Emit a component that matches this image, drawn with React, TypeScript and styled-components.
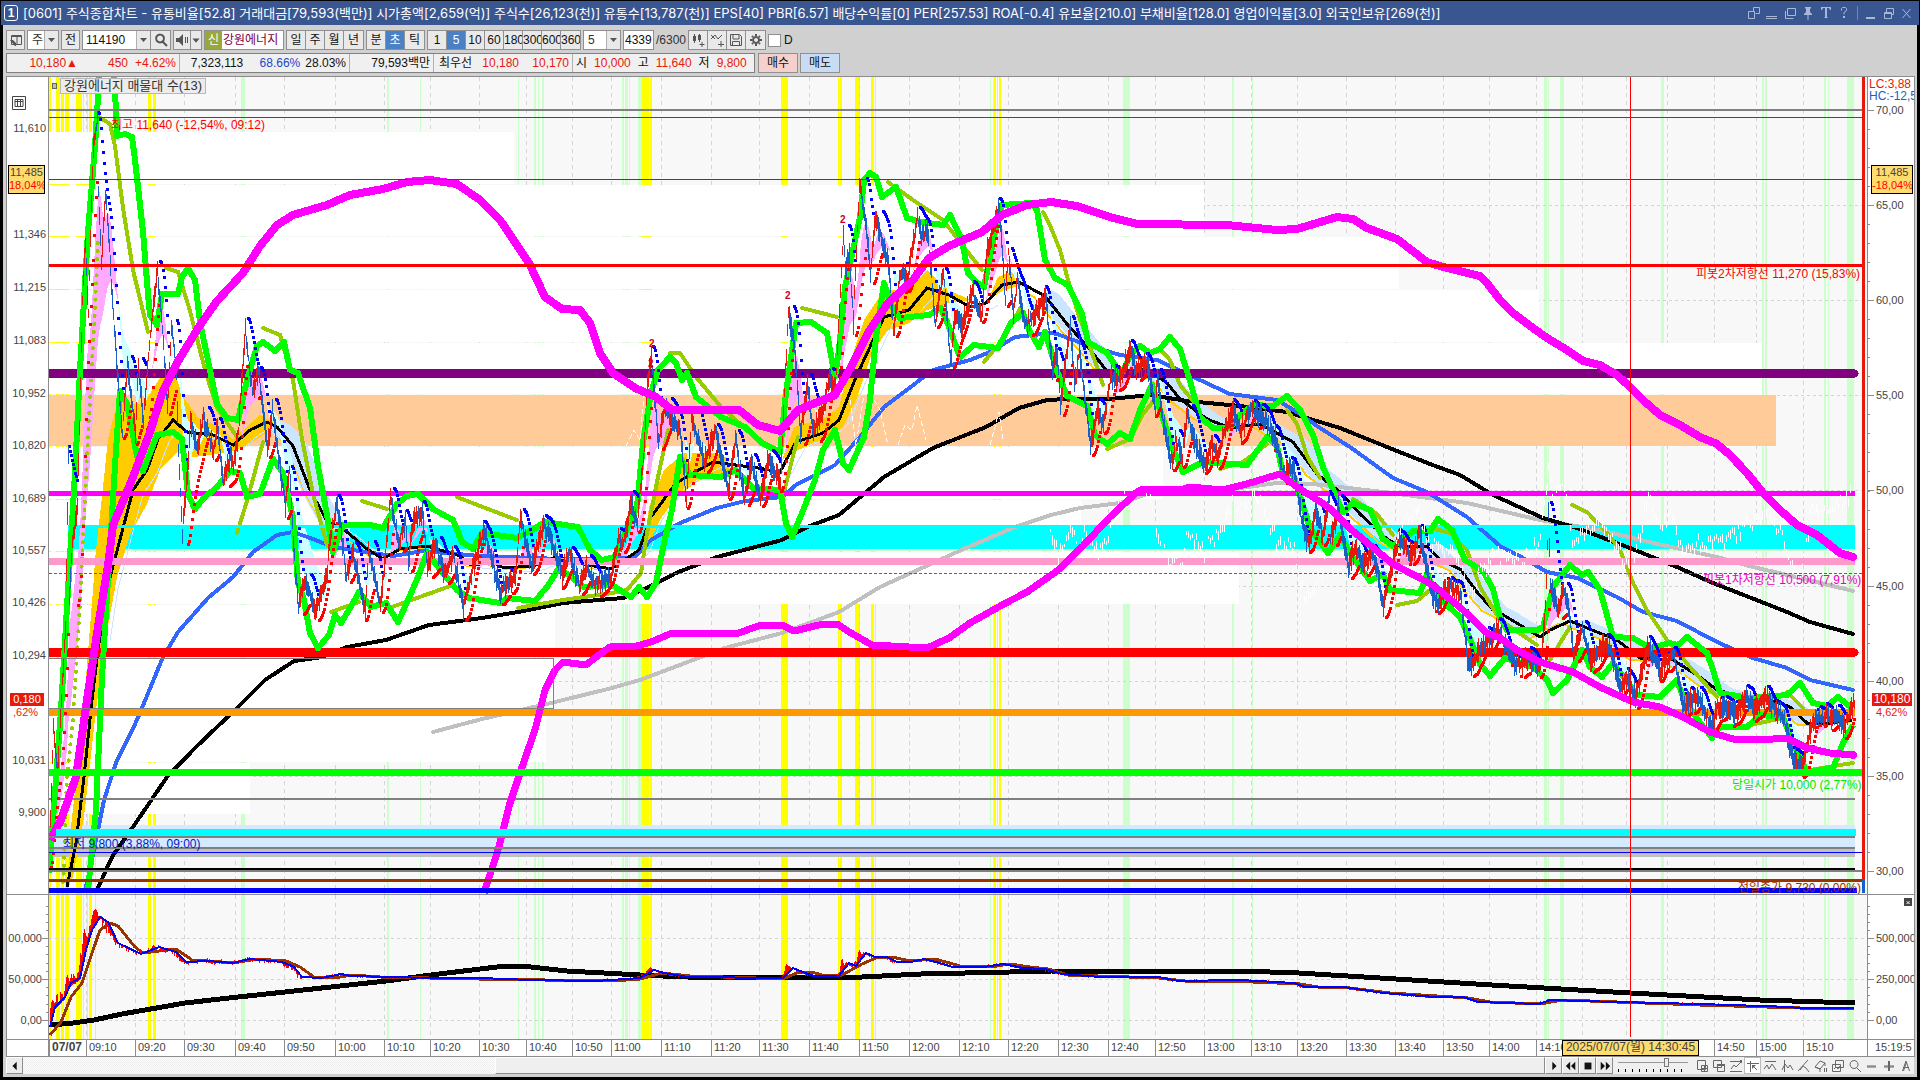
import React from 'react';
import styled, { createGlobalStyle, css } from 'styled-components';

/* ---------- chart data ---------- */

type Pt = [number, number];
const pts = (s: string): Pt[] => s.trim().split(/\s+/).map((p) => p.split(',').map(Number) as Pt);
const line = (s: string) => 'M' + s.trim().replace(/\s+/g, ' L');

const X0 = 49;
const X1 = 1867;
const Y0 = 77;
const Y1 = 894;
const left = (x: number) => `${((x - X0) / (X1 - X0)) * 100}%`;
const top = (y: number) => `${((y - Y0) / (Y1 - Y0)) * 100}%`;
const topLow = (y: number) => `${((y - 895) / 144) * 100}%`;

const PRICE = pts(`49,850 51,790 53,725 57,770 61,700 65,627 68,455 69,597 72,540 77,508 82,301 85,244 88,315 91,198 93,151
97,118 98,189 101,261 105,196 108,232 112,301 117,370 122,432 127,363 135,432 138,366 143,422 147,366 152,315 157,270 161,315 167,404
171,325 176,370 178,456 182,532 187,473 190,422 197,449 203,418 213,449 217,428 223,480 230,456 233,466 238,432 241,387 245,329
252,394 258,370 262,404 267,449 272,410 277,449 285,504 289,470 293,542 298,610 304,577 314,613 327,577 328,552 336,504 340,525
346,577 352,552 362,594 365,608 368,552 380,603 383,577 390,497 398,542 405,521 408,563 413,521 422,511 427,566 435,542 443,573
453,556 463,608 473,567 484,530 500,593 515,573 520,517 531,567 544,523 562,573 569,553 579,588 586,567 594,583 611,577 618,537
623,543 631,503 637,523 643,460 647,380 651,357 658,443 664,407 680,432 686,500 691,417 704,463 715,430 728,490 735,438 744,500
751,463 760,497 768,460 780,483 784,393 788,310 794,347 800,433 807,387 813,430 821,413 829,380 835,390 839,310 843,230 845,270
849,253 853,320 859,183 866,230 870,270 875,217 888,263 893,330 900,273 907,280 917,217 921,237 927,230 935,323 943,270 950,360
955,313 962,327 972,290 981,320 986,253 999,207 1005,299 1008,249 1013,314 1017,278 1024,324 1033,317 1045,296 1052,371 1057,353
1060,406 1070,324 1074,385 1079,350 1090,446 1097,410 1103,424 1110,378 1120,378 1130,349 1135,367 1147,364 1155,410 1157,374
1162,417 1172,467 1175,439 1182,456 1187,410 1193,439 1205,467 1211,442 1218,456 1225,428 1233,410 1240,431 1250,410 1262,417
1277,442 1282,474 1293,467 1302,524 1309,546 1315,510 1322,535 1329,499 1330,539 1338,510 1348,567 1355,546 1362,564 1373,553
1383,603 1398,539 1412,556 1419,531 1430,589 1437,606 1448,585 1460,596 1467,660 1472,663 1478,650 1498,630 1505,647 1515,663
1530,660 1540,667 1545,610 1548,515 1550,587 1557,610 1563,590 1568,607 1573,653 1582,630 1590,660 1607,643 1613,660 1620,690
1627,677 1635,697 1647,647 1660,670 1673,653 1683,707 1697,697 1712,727 1717,707 1737,713 1745,697 1753,710 1765,697 1783,717
1793,760 1802,767 1812,720 1823,717 1837,717 1843,727 1853,703`);

let seed = 20250707;
const rnd = () => {
  seed = (seed * 1664525 + 1013904223) % 4294967296;
  return seed / 4294967296;
};

const at = (p: Pt[], x: number) => {
  let i = 1;
  while (i < p.length - 1 && p[i][0] < x) i++;
  const [ax, ay] = p[i - 1];
  const [bx, by] = p[i];
  const t = Math.max(0, Math.min(1, (x - ax) / (bx - ax || 1)));
  return ay + (by - ay) * t;
};

function buildCandles() {
  let up = '';
  let down = '';
  let above = '';
  let below = '';
  let pink = '';
  let ice = '';
  let rising = true;
  let sar = 870;
  let extreme = 850;
  let af = 0.02;
  let fast = 850;
  let slow = 850;
  let red = true;
  for (let x = 50; x <= 1854; x++) {
    const mid = at(PRICE, x) + (rnd() - 0.5) * 5;
    const hi = mid - 3 - rnd() * 10;
    const lo = mid + 3 + rnd() * 10;
    if (x % 2 === 0) {
      const slope = at(PRICE, x + 2) - at(PRICE, x - 2);
      red = slope + (rnd() - 0.5) * 18 < 0;
    }
    const bar = `M${x + 0.5} ${hi.toFixed(0)}V${lo.toFixed(0)}`;
    if (red) up += bar;
    else down += bar;

    const f0 = fast;
    const s0 = slow;
    fast += (mid - fast) * 0.16;
    slow += (mid - slow) * 0.06;
    const quad = `M${x} ${f0.toFixed(0)}H${x + 1}V${slow.toFixed(0)}H${x}Z`;
    if (f0 < s0) pink += quad;
    else ice += quad;

    sar += af * (extreme - sar);
    if (rising) {
      if (hi < extreme) {
        extreme = hi;
        af = Math.min(0.2, af + 0.02);
      }
      if (lo > sar) {
        rising = false;
        sar = extreme;
        extreme = lo;
        af = 0.03;
      }
    } else {
      if (lo > extreme) {
        extreme = lo;
        af = Math.min(0.2, af + 0.02);
      }
      if (hi < sar) {
        rising = true;
        sar = extreme;
        extreme = hi;
        af = 0.03;
      }
    }
    const dot = `M${x - 1} ${sar.toFixed(0)}h3`;
    if (rising) below += dot;
    else above += dot;
  }
  return { up, down, above, below, pink, ice };
}
const CANDLES = buildCandles();

const MAG_UP = `50,840 61,820 76,777 88,693 98,627 108,565 113,525 133,477 150,432 163,391 177,363 200,325 217,301 243,273 260,246 277,225
293,215 327,205 350,195 383,189 407,182 430,180 457,184 480,200 500,220 529,263 545,297 562,309 580,310 590,323 600,353 613,373 635,388
656,397 672,410 739,410 758,425 780,431 798,410 835,395 851,367 868,333 888,303 913,280 929,258 949,246 982,232 1002,215 1027,205
1051,202 1077,206 1110,217 1137,224 1227,225 1277,230 1297,229 1337,217 1353,219 1367,228 1397,239 1427,262 1443,267 1480,276 1487,283
1500,300 1513,313 1533,328 1547,338 1567,350 1583,361 1600,365 1617,375 1630,387 1643,400 1660,415 1680,425 1700,437 1717,444 1730,455
1747,473 1763,493 1780,510 1797,525 1817,535 1840,553 1853,557`;
const MAG_LOW = `484,893 498,850 510,803 522,767 535,730 545,690 555,670 563,662 586,665 596,657 610,647 637,646 651,642 672,633 739,633
758,626 782,625 794,631 819,625 837,624 851,633 872,645 927,648 949,638 970,623 1002,605 1027,592 1057,571 1083,546 1110,517 1137,492
1143,489 1180,490 1190,487 1223,490 1250,483 1280,474 1300,489 1327,506 1353,531 1393,564 1433,585 1463,610 1487,633 1500,638 1517,650
1540,662 1573,672 1600,687 1633,702 1660,707 1683,717 1710,732 1733,739 1760,740 1787,738 1807,748 1830,753 1853,755`;
const BLUE = `86,887 96,840 104,800 116,763 137,720 163,657 178,632 208,598 233,577 253,552 277,535 293,532 313,539 333,547 393,556
423,551 480,556 560,559 611,559 635,557 651,540 680,523 717,508 745,501 782,497 796,485 835,465 860,437 884,407 904,392 933,370 970,360
990,352 1015,337 1051,333 1057,334 1090,346 1120,355 1157,360 1187,374 1230,394 1277,400 1300,414 1320,428 1350,447 1393,478 1427,492
1467,517 1500,546 1523,558 1547,572 1577,578 1617,597 1643,612 1677,621 1717,642 1753,658 1787,668 1810,680 1853,690`;
const BLACK_LONG = `98,888 112,857 133,827 167,777 196,747 237,708 265,680 294,661 322,657 347,647 386,640 429,625 482,618 518,612
563,603 623,598 647,588 676,573 717,557 782,540 807,527 839,515 884,477 933,448 986,427 1019,408 1047,400 1067,399 1110,399 1150,395
1187,401 1240,406 1287,412 1340,428 1397,451 1430,464 1460,475 1493,495 1543,518 1577,528 1630,548 1677,567 1713,583 1787,612 1810,622
1853,634`;
const BLACK_MID = `67,887 76,843 84,777 92,700 98,650 108,585 133,490 147,470 158,439 173,420 187,432 213,435 233,445 250,430 267,422
277,427 293,446 310,490 327,521 347,532 367,549 383,559 400,549 427,546 460,556 470,564 480,564 488,560 504,568 533,566 556,557 578,563
611,569 639,550 651,517 676,483 713,462 758,468 780,472 796,442 823,433 839,420 856,377 884,317 909,310 927,288 949,295 970,307 986,303
1002,285 1019,282 1045,296 1067,324 1087,346 1107,371 1123,374 1147,369 1167,383 1180,399 1207,419 1230,428 1260,424 1293,442 1317,474
1340,492 1360,514 1387,539 1400,546 1427,546 1440,560 1460,569 1477,592 1493,610 1500,613 1540,637 1550,630 1570,621 1587,628 1617,640
1640,658 1673,660 1700,677 1717,690 1747,698 1777,702 1790,707 1807,723 1830,723 1852,720`;
const SILVER = `433,732 482,719 551,703 612,688 640,680 725,648 782,633 839,612 880,587 933,563 966,548 1015,527 1051,515 1080,508
1120,503 1147,494 1233,489 1277,483 1313,484 1383,492 1467,503 1540,520 1600,530 1653,543 1717,557 1753,567 1800,578 1853,591`;
const GREEN_UP = `49,873 55,793 61,710 68,590 75,473 80,370 88,232 95,146 99,81 101,60 113,60 115,90 117,136 125,134 132,137 135,160
143,232 148,294 150,315 157,325 162,294 178,294 182,277 188,268 195,280 200,322 210,370 217,404 227,418 238,420 247,380 257,346 263,342
275,351 284,342 290,370 298,373 310,408 318,466 327,515 333,552 343,525 370,525 383,528 397,504 407,496 418,494 433,509 453,520 462,542
473,549 482,533 517,538 532,530 545,522 578,527 590,550 602,560 615,557 625,533 637,507 643,443 651,393 658,370 670,357 676,363 682,380
687,373 696,397 721,417 745,427 762,443 780,452 786,393 796,323 811,322 827,333 835,377 839,350 845,287 853,250 860,217 864,180 870,173
876,177 882,197 896,187 907,218 921,222 943,225 950,215 962,240 968,273 976,282 984,287 994,237 1002,205 1031,203 1037,210 1045,260
1055,278 1068,285 1082,314 1088,342 1107,353 1121,374 1132,353 1140,346 1150,353 1160,349 1170,337 1180,349 1190,381 1200,417 1213,428
1230,428 1240,415 1253,405 1273,406 1287,396 1300,410 1313,435 1323,467 1337,499 1343,512 1353,503 1370,510 1383,539 1393,546 1413,531
1430,531 1438,519 1452,530 1465,560 1483,571 1493,589 1500,617 1507,630 1537,630 1543,627 1553,587 1570,565 1582,575 1588,572 1600,590
1613,637 1633,638 1650,648 1670,643 1678,645 1687,637 1707,653 1713,670 1720,693 1750,698 1787,695 1800,683 1813,703 1827,706 1838,697
1853,709`;
const GREEN_LOW = `88,890 96,810 102,677 108,580 115,466 120,391 127,404 137,456 143,471 157,435 173,432 182,439 188,494 195,509 203,499
217,487 230,471 240,473 247,497 260,494 273,459 283,473 293,518 298,583 304,600 310,633 318,648 329,635 335,615 341,623 353,603 359,592
371,607 386,603 398,622 408,600 418,577 427,553 443,573 457,590 469,598 500,603 507,598 535,601 547,587 559,568 571,577 584,587 612,585
631,597 639,587 647,597 656,583 664,543 672,510 680,457 690,475 721,477 735,470 753,488 780,490 786,523 792,537 802,513 815,480 823,450
835,430 843,463 849,470 864,437 870,400 876,337 884,283 892,307 900,318 929,315 941,308 949,327 960,357 974,345 998,348 1011,323
1023,313 1029,330 1039,347 1045,332 1057,371 1067,396 1087,406 1095,435 1107,444 1120,433 1130,439 1140,410 1152,385 1160,410 1173,449
1183,472 1203,462 1247,465 1267,437 1277,446 1283,474 1293,474 1310,528 1328,553 1340,535 1350,553 1370,581 1383,574 1390,590 1420,593
1427,574 1437,596 1460,617 1470,639 1480,664 1490,676 1505,658 1533,667 1547,680 1553,693 1567,680 1582,650 1590,667 1602,677 1613,663
1637,695 1660,697 1677,680 1683,697 1693,713 1712,738 1720,727 1747,727 1760,715 1783,717 1793,743 1807,772 1833,768 1843,743 1853,725`;

const OLIVE = [
  '99,117 110,124 115,146 123,208 133,270 148,332',
  '166,268 178,272 190,311 205,370 217,408 237,437',
  '263,328 280,335 293,380 302,439 313,494 327,545',
  '237,533 247,501 263,442',
  '331,612 359,602',
  '392,607 453,585',
  '362,501 387,509',
  '457,497 480,506 517,520',
  '518,608 563,600 612,593 627,590 641,573 647,533 658,477 668,430',
  '670,353 680,353 696,377 721,407 762,443',
  '802,308 837,317',
  '782,500 792,460 798,437',
  '888,182 913,200 943,220 966,250 982,270',
  '1043,212 1049,223 1060,250 1068,280 1077,310 1087,339 1097,367 1103,385',
  '984,362 1002,340 1021,307',
  '1107,449 1130,439 1143,414 1155,399',
  '1160,349 1170,360 1180,385 1197,406',
  '1220,469 1243,462 1267,444',
  '1287,410 1297,424 1307,456 1320,478',
  '1353,499 1377,514 1393,535',
  '1397,605 1417,601 1430,590',
  '1427,527 1450,533 1467,550 1480,587 1500,620 1537,645',
  '1572,505 1587,512 1607,533 1620,550 1633,583 1647,610 1667,640 1690,667 1717,697',
  '1550,660 1560,643 1570,627',
  '1750,725 1783,718',
  '1787,692 1803,708',
  '1810,770 1840,765 1853,763',
];

const GOLD = [
  `67,890 71,827 82,727 94,577 95,559 102,497 108,439 117,404 143,404 160,378 175,373 183,397 200,420 217,425 233,439 260,415 277,425
   267,432 247,446 230,452 187,458 177,452 160,470 147,504 130,535 117,577 106,637 96,710 84,817 73,877`,
  '643,553 649,507 664,470 684,453 717,453 737,463 725,473 700,480 676,497 660,520 651,540',
  `782,460 794,427 827,417 839,407 851,360 864,320 884,290 909,290 927,270 949,290 970,300 949,303 927,310 909,323 888,330 872,353
   856,400 843,427 823,440 798,450`,
  '988,300 998,277 1011,272 1023,282 1035,290 1019,286 1004,290',
];

const midPts = pts(BLACK_MID);
const shifted = (from: number, to: number, dx: number, dy: number): Pt[] => {
  const out: Pt[] = [];
  for (let x = from; x <= to; x += 4) out.push([x, Math.round(at(midPts, x - dx) + dy)]);
  return out;
};
const join = (p: Pt[]) => p.map((q) => q.join(',')).join(' ');
const cloud = (from: number, to: number) => join([...shifted(from, to, 14, -2), ...shifted(from, to, -8, 2).reverse()]);

const WHITE_NOISE = [
  '1050,525 1057,550 1070,527 1080,548 1084,527 1097,548 1104,545 1110,520 1130,480 1143,475 1152,500 1160,545 1170,560 1182,562 1188,527 1205,548 1220,530 1232,500 1245,508 1256,490 1262,500 1277,540 1293,545 1305,600 1325,560',
  '1396,540 1405,520 1415,508 1420,515 1430,545 1450,545 1460,565 1470,590 1480,570 1492,550 1520,560 1540,535 1548,465 1553,495 1563,480 1573,540 1600,520 1620,547 1630,570 1647,495 1660,520 1673,510 1682,553 1697,540 1713,540 1733,533 1763,510 1783,530 1793,570 1803,570 1810,513 1833,503 1850,493',
  '837,445 843,405 849,440 M855,397',
].slice(0, 2).map((s) => {
  const p = pts(s);
  let d = '';
  for (let x = p[0][0]; x <= p[p.length - 1][0]; x += 2) {
    const y = at(p, x) + (rnd() - 0.5) * 16;
    d += `M${x} ${y.toFixed(0)}v${(3 + rnd() * 7).toFixed(0)}`;
  }
  return d;
});
const WHITE_LOW = 'M626,446 634,430 640,440 644,395M850,400 856,445 864,395M874,400 880,410 888,445M898,445 905,425 912,430 917,405 926,440M990,445 999,412 1003,440';

const YELLOW_STRIPES: Pt[] = [[49, 2], [56, 4], [61, 3], [65, 4], [76, 6], [83, 1], [87, 1], [89, 3], [95, 1], [148, 3], [153, 3], [642, 7], [650, 2],
  [781, 7], [838, 1], [840, 2], [855, 5], [871, 3], [875, 1], [994, 2], [997, 1], [999, 2]];
const GREEN_STRIPES: Pt[] = [[241, 4], [387, 2], [420, 1], [518, 1], [534, 2], [538, 1], [542, 2], [622, 2], [625, 3], [629, 1], [638, 4], [990, 1],
  [993, 1], [1123, 7], [1232, 2], [1252, 1], [1544, 3], [1548, 1], [1560, 4], [1661, 3], [1762, 2], [1765, 2], [1824, 2], [1828, 1], [1847, 7]];

const PROFILE: [number, number, number][] = [[132, 184, 514], [185, 236, 1204], [237, 289, 1399], [290, 342, 1539], [343, 394, 1762],
  [447, 499, 1163], [500, 551, 1081], [552, 604, 1239], [605, 657, 555], [658, 709, 553], [710, 762, 546], [763, 814, 250]];

const TIMES: [number, string][] = [[87, '09:10'], [136, '09:20'], [185, '09:30'], [236, '09:40'], [285, '09:50'], [336, '10:00'],
  [385, '10:10'], [431, '10:20'], [480, '10:30'], [527, '10:40'], [573, '10:50'], [612, '11:00'], [662, '11:10'], [712, '11:20'],
  [760, '11:30'], [810, '11:40'], [860, '11:50'], [910, '12:00'], [960, '12:10'], [1009, '12:20'], [1059, '12:30'], [1109, '12:40'],
  [1156, '12:50'], [1205, '13:00'], [1252, '13:10'], [1298, '13:20'], [1347, '13:30'], [1396, '13:40'], [1444, '13:50'], [1490, '14:00'],
  [1537, '14:10'], [1583, ''], [1627, ''], [1668, ''], [1715, '14:50'], [1757, '15:00'], [1804, '15:10']];

const LEFT_LABELS: [number, string][] = [[128, '11,610'], [234, '11,346'], [287, '11,215'], [340, '11,083'], [393, '10,952'],
  [445, '10,820'], [498, '10,689'], [550, '10,557'], [602, '10,426'], [655, '10,294'], [760, '10,031'], [812, '9,900']];
const RIGHT_LABELS: [number, string][] = [[110, '70,00'], [205, '65,00'], [300, '60,00'], [395, '55,00'], [490, '50,00'], [586, '45,00'],
  [681, '40,00'], [776, '35,00'], [871, '30,00']];
const LOW_LABELS: [number, string][] = [[938, '500,000'], [979, '250,000'], [1020, '0,00']];

const OBV = `50,1027 55,1007 65,997 71,983 80,978 86,950 92,930 100,917 108,922 118,943 141,954 159,947 176,952 186,962 208,961 233,963
249,959 282,962 294,967 302,977 322,978 341,974 351,976 431,978 480,978 531,980 596,981 640,978 654,970 664,973 688,977 713,977 756,978
783,978 793,968 805,973 814,976 839,976 849,963 856,966 866,953 875,957 887,957 897,962 911,962 924,959 936,962 953,967 984,967 1003,964
1023,968 1045,969 1062,974 1100,977 1159,977 1178,981 1240,980 1294,983 1305,987 1344,987 1383,993
1435,997 1463,997 1478,1002 1539,1004 1550,1000 1617,1002 1700,1004 1791,1007 1797,1008 1854,1008`;
const OBV_MA = `50,1035 61,1022 71,997 82,983 92,953 100,930 110,923 118,926 135,947 143,953 176,949 192,960 208,961 233,963 256,959
286,961 300,967 314,977 334,978 352,975 380,977 478,979 612,981 640,979 662,973 690,976 756,978 785,978 797,973 812,972 825,976 842,975
862,964 878,957 892,957 910,961 935,959 960,966 990,967 1010,964 1030,967 1048,969 1068,975 1159,978 1185,981 1230,981 1300,984
1318,987 1350,988 1390,993 1468,998 1490,1002 1540,1004 1562,1000 1617,1002 1700,1005 1800,1008 1854,1008`;
const OBV_LONG = `50,1025 73,1023 94,1020 122,1014 185,1003 229,998 285,992 386,981 431,975 480,969 506,966 531,967 567,971 640,975
686,977 843,978 921,974 1010,972 1052,971 1240,971 1299,973 1396,979 1492,985 1630,993 1760,1000 1855,1003`;

const obvPts = pts(OBV);
let obvNoise = '';
for (let x = 50; x <= 1854; x++) {
  const y = at(obvPts, x);
  const lead = at(obvPts, Math.min(1854, x + 4));
  const amp = x < 110 ? 14 : x < 300 ? 6 : 3;
  obvNoise += `M${x} ${y.toFixed(0)}V${(lead + (rnd() - 0.5) * amp).toFixed(0)}`;
}

/* ---------- styling ---------- */

const Global = createGlobalStyle`
  * { box-sizing: border-box; }
  body { margin: 0; background: #000; }
  body, button, input, select { font: 12px/16px "Liberation Sans", "Noto Sans CJK KR", sans-serif; color: #111; }
`;

const Win = styled.div`
  min-height: 100vh;
  padding: 1px 1px 3px;
  display: flex;
  flex-direction: column;
`;
const TitleBar = styled.header`
  height: 24px;
  flex: none;
  display: flex;
  align-items: center;
  padding: 0 3px;
  background: #3a5690;
  color: #fff;
  overflow: hidden;
`;
const TitleNo = styled.span`
  width: 14px;
  height: 16px;
  margin-right: 5px;
  border: 1px solid #fff;
  border-radius: 3px;
  text-align: center;
  font-weight: bold;
  line-height: 14px;
`;
const Title = styled.h1`
  margin: 0;
  flex: 1;
  font-family: Inter, 'Noto Sans CJK KR', sans-serif;
  font-size: 13px;
  font-weight: normal;
  line-height: 20px;
  white-space: pre;
`;
const TitleButton = styled.button`
  width: 18px;
  height: 20px;
  padding: 0;
  border: 0;
  background: none;
  color: #a9b8d8;
  display: grid;
  place-items: center;
`;
const TitleRule = styled.span`
  width: 1px;
  height: 14px;
  margin: 0 4px;
  background: #7087b5;
`;
const Body = styled.main`
  flex: 1;
  display: flex;
  flex-direction: column;
  margin: 0 2px;
  padding: 5px 2px 3px;
  background: #d0d0d0;
`;
const Bar = styled.div`
  display: flex;
  flex: none;
  align-items: stretch;
  height: 20px;
  margin: 0 0 3px 1px;
  gap: 2px;
`;
const Group = styled.div`
  display: flex;
  border: 1px solid #909090;
  background: #e9e9e9;
`;
const Btn = styled.button<{ $w?: number; $on?: boolean; $bg?: string; $box?: boolean }>`
  width: ${(p) => p.$w ?? 19}px;
  padding: 0;
  border: 0;
  border-right: 1px solid #909090;
  background: ${(p) => (p.$on ? '#4a80c4' : p.$bg ?? '#e9e9e9')};
  color: ${(p) => (p.$on ? '#fff' : '#111')};
  display: grid;
  place-items: center;
  overflow: hidden;
  white-space: nowrap;
  svg { color: #555; }
  ${(p) => p.$box && css`border: 1px solid #909090;`}
  &:last-child { border-right-width: ${(p) => (p.$box ? 1 : 0)}px; }
`;
const Field = styled.input<{ $w: number; $color?: string; $flat?: boolean }>`
  width: ${(p) => p.$w}px;
  padding: 0 1px;
  border: ${(p) => (p.$flat ? '0' : '1px solid #909090')};
  border-radius: 0;
  background: #fff;
  color: ${(p) => p.$color ?? '#111'};
`;
const Combo = styled.label<{ $w: number; $flat?: boolean }>`
  position: relative;
  width: ${(p) => p.$w}px;
  display: flex;
  border: 1px solid #909090;
  background: #fff;
  ${(p) => p.$flat && 'border-width: 0 1px 0 0; padding-left: 2px;'}
  svg { position: absolute; right: 0; top: 0; pointer-events: none; }
`;
const ComboSelect = styled.select`
  width: 100%;
  border: 0;
  padding: 0 4px;
  background: none;
  appearance: none;
  color: #333;
`;
const Tag = styled.span`
  width: 17px;
  background: #98a83c;
  color: #fff;
  text-align: center;
  line-height: 19px;
`;
const Plain = styled.span`
  width: 30px;
  line-height: 20px;
  color: #333;
`;
const Check = styled.label`
  display: flex;
  align-items: center;
  gap: 3px;
  input {
    appearance: none;
    width: 13px;
    height: 13px;
    margin: 0;
    border: 1px solid #909090;
    background: #fff;
  }
`;
const Info = styled.div`
  display: flex;
  width: 749px;
  margin-right: 1px;
  border: 1px solid #808080;
  background: #f0f0f0;
`;
const Cell = styled.div<{ $w: number }>`
  width: ${(p) => p.$w}px;
  padding: 0 3px;
  display: flex;
  gap: 5px;
  justify-content: flex-end;
  line-height: 18px;
  white-space: nowrap;
  & + & { border-left: 1px solid #b0b0b0; }
  &:last-child { justify-content: flex-start; gap: 7px; }
`;
const Num = styled.span<{ $c?: string; $w?: number }>`
  color: ${(p) => p.$c ?? '#111'};
  min-width: ${(p) => p.$w ?? 0}px;
  text-align: right;
`;

const Chart = styled.section`
  flex: 1;
  min-height: 400px;
  margin-left: 1px;
  display: grid;
  grid-template-columns: 42px minmax(0, 1fr) 47px;
  grid-template-rows: minmax(0, 1fr) 145px 17px;
  border: 1px solid #8c8c8c;
  background: #fff;
`;
const Axis = styled.div<{ $side: 'l' | 'r'; $low?: boolean }>`
  position: relative;
  overflow: hidden;
  font-size: 11px;
  color: #444;
  ${(p) => (p.$side === 'l' ? 'border-right' : 'border-left')}: 1px solid #8c8c8c;
  ${(p) => p.$low && 'border-top: 1px solid #8c8c8c;'}
`;
const AxisText = styled.span<{ $side: 'l' | 'r'; $low?: boolean }>`
  position: absolute;
  ${(p) => (p.$side === 'l' ? `right: ${p.$low ? 6 : 2}px` : 'left: 8px')};
  margin-top: -8px;
  ${(p) =>
    (p.$side === 'r' || p.$low) &&
    css`
      &::after {
        content: '';
        position: absolute;
        top: 8px;
        width: 6px;
        height: 1px;
        background: #8c8c8c;
        ${p.$side === 'r' ? 'left: -8px' : 'right: -6px'};
      }
    `}
`;
const MinorTick = styled.i<{ $side: 'l' | 'r' }>`
  position: absolute;
  ${(p) => (p.$side === 'l' ? 'right' : 'left')}: 0;
  width: 2px;
  height: 1px;
  background: #8c8c8c;
`;
const CursorTag = styled.span<{ $side: 'l' | 'r' }>`
  position: absolute;
  ${(p) => (p.$side === 'l' ? 'left: 1px; right: 3px' : 'left: 3px; right: 1px')};
  height: 29px;
  border: 1px solid #000;
  background: #ffdc6e;
  line-height: 13px;
  text-align: center;
  overflow: hidden;
  white-space: nowrap;
  em { display: block; font-style: normal; color: #f00; }
`;
const LastTag = styled.span<{ $side: 'l' | 'r' }>`
  position: absolute;
  ${(p) => (p.$side === 'l' ? 'left: 3px; width: 34px' : 'left: 4px; right: 2px')};
  height: 13px;
  background: #e8180c;
  color: #fff;
  font-size: ${(p) => (p.$side === 'l' ? 11 : 12)}px;
  line-height: 13px;
  overflow: hidden;
  text-align: center;
`;
const AxisNote = styled.span<{ $c: string; $x: number; $size?: number }>`
  position: absolute;
  left: ${(p) => p.$x}px;
  color: ${(p) => p.$c};
  font-size: ${(p) => p.$size ?? 11}px;
  line-height: 12px;
  white-space: nowrap;
`;
const Plot = styled.div<{ $low?: boolean }>`
  position: relative;
  overflow: hidden;
  background: #f8f8f8;
  ${(p) => p.$low && 'border-top: 1px solid #8c8c8c;'}
  > svg { position: absolute; inset: 0; width: 100%; height: 100%; display: block; }
`;
const Legend = styled.div`
  position: absolute;
  left: 3px;
  top: 1px;
  display: flex;
  align-items: center;
  gap: 3px;
  height: 15px;
  span { border: 1px solid #b8b8b8; background: #ececec; padding: 0 3px; font-size: 13px; line-height: 14px; color: #333; }
  i { width: 5px; height: 6px; border: 1px solid #666; background: #bbb; }
`;
const Note = styled.span<{ $c: string }>`
  position: absolute;
  color: ${(p) => p.$c};
  white-space: nowrap;
  line-height: 14px;
  margin-top: -7px;
`;
const Mark = styled(Note)`
  font-size: 10px;
  font-weight: bold;
  margin-left: -3px;
`;
const TimeAxis = styled.div`
  position: relative;
  border-top: 1px solid #8c8c8c;
  font-size: 11px;
  line-height: 14px;
  color: #444;
  overflow: hidden;
`;
const TimeText = styled.span<{ $bold?: boolean }>`
  position: absolute;
  top: 0;
  height: 17px;
  padding-left: 2px;
  border-left: 1px solid #8c8c8c;
  font-size: ${(p) => (p.$bold ? 12 : 11)}px;
  font-weight: ${(p) => (p.$bold ? 'bold' : 'normal')};
`;
const TimeTag = styled.span`
  position: absolute;
  top: 0;
  width: 137px;
  height: 16px;
  border: 1px solid #000;
  background: #ffdc6e;
  font-size: 12px;
  text-align: center;
  line-height: 13px;
  white-space: nowrap;
`;
const Corner = styled.div`
  border-top: 1px solid #8c8c8c;
  border-left: 1px solid #8c8c8c;
  padding-left: 7px;
  font-size: 11px;
  line-height: 14px;
  color: #444;
  overflow: hidden;
`;
const CornerL = styled.div`
  border-top: 1px solid #8c8c8c;
  border-right: 1px solid #8c8c8c;
`;
const CloseMini = styled.button`
  position: absolute;
  right: 2px;
  top: 3px;
  width: 8px;
  height: 8px;
  padding: 0;
  border: 0;
  background: #444;
  color: #fff;
  font-size: 8px;
  line-height: 7px;
`;

const Bottom = styled.footer`
  flex: none;
  display: flex;
  height: 17px;
  margin: 0 1px;
  background: #f0f0f0;
`;
const Raised = styled.button`
  width: 17px;
  padding: 0;
  border: 1px solid #8c8c8c;
  border-top-color: #fff;
  border-left-color: #fff;
  background: #ececec;
  display: grid;
  place-items: center;
`;
const Track = styled.div`
  flex: 1;
  display: flex;
  justify-content: flex-end;
  background: repeating-conic-gradient(#fff 0 25%, #ececec 0 50%) 0 0 / 2px 2px;
`;
const Thumb = styled.div`
  width: 69%;
  border: 1px solid #8c8c8c;
  border-top-color: #fff;
  border-left-color: #fff;
  background: #efefef;
`;
const Zoom = styled.label`
  width: 80px;
  padding: 1px 5px 0;
  display: flex;
  flex-direction: column;
  input {
    appearance: none;
    width: 100%;
    height: 9px;
    margin: 0;
    background: linear-gradient(#999, #999) 0 4px / 100% 1px no-repeat;
  }
  input::-webkit-slider-thumb {
    appearance: none;
    width: 5px;
    height: 9px;
    border: 1px solid #777;
    background: #eee;
  }
  &::after {
    content: '';
    height: 3px;
    margin-top: 2px;
    background: repeating-linear-gradient(90deg, #000 0 1px, transparent 1px 7px);
  }
`;
const Tool = styled.button<{ $on?: boolean }>`
  width: 17px;
  padding: 0;
  border: ${(p) => (p.$on ? '1px solid #bbb' : '0')};
  background: ${(p) => (p.$on ? '#fff' : 'none')};
  color: #666;
  display: grid;
  place-items: center;
`;

/* ---------- icons ---------- */

const Ico = ({ d, fill, size = 14, w = 1 }: { d: string; fill?: string; size?: number; w?: number }) => (
  <svg width={size} height={size} viewBox="0 0 14 14" fill="none" stroke="currentColor" strokeWidth={w} aria-hidden="true">
    <path d={d} />
    {fill && <path d={fill} fill="currentColor" stroke="none" />}
  </svg>
);
const Arrow = () => (
  <svg width="14" height="18" viewBox="0 0 14 18" aria-hidden="true">
    <path d="M0 0h14v18H0z" fill="#e9e9e9" />
    <path d="M.5 0v18" stroke="#b0b0b0" />
    <path d="M4 7h7l-3.5 4z" fill="#555" />
  </svg>
);

const TITLE_ICONS: [string, string, string?][] = [
  ['창 분리', 'M1.5 5.5h6v7h-6zM6.5 5v-3.5h6v6h-4'],
  ['내리기', 'M1 10.5h11M1 12.5h11'],
  ['복사', 'M4.5 2.5h8v7h-8zM2.5 5v7.5h8'],
  ['고정', 'M7 9v5', 'M4 1h6v1l-1 1v3l2 2v1H3V8l2-2V3L4 2z'],
  ['글꼴', 'M7 2v10', 'M2 1h10v3h-1l-1-2H4L3 4H2zM6 2h2v9l1 1H5l1-1z'],
  ['도움말', 'M4.5 4.5v-2l1-1h3l1 1v2l-2.5 2v2', 'M6 10h2v2H6z'],
];
const WINDOW_ICONS: [string, string, string?][] = [
  ['최소화', 'M2 11.5h9M2 12.5h9'],
  ['복원', 'M2.5 6.5h7v6h-7zM4.5 6v-3.5h7v6h-2M2 7.5h7'],
  ['닫기', 'M2.5 3l8 9M10.5 3l-8 9'],
];
const TOOLS: [string, string, string?][] = [
  ['차트 추가', 'M2.5 1.5h8v9h-8zM6.5 6.5h6v6h-6zM9.5 7v5M7 9.5h5'],
  ['창 겹치기', 'M1.5 1.5h8v7h-8zM5.5 5.5h7v7h-7z', 'M5 5h8v2H5z'],
  ['영역 설정', 'M1 2.5h12M1 12.5h12M2 10l3-4 2 2 5-5', 'M11 1h2v3h-2z'],
  ['십자선', 'M4.5 2v11M1 4.5h12M6 6l5 5', 'M6 6h4l-4 4z'],
  ['추세선', 'M2 2.5h11M1 10l3-4 2 4 3-5 4 6'],
  ['수직선', 'M4.5 1v12M2 11l3-6 3 4 2-3 3 5'],
  ['각도선', 'M1 12L11 1M3 11l3-4 3 2 3 4'],
  ['전체 지우기', 'M1 8l5-6 5 2-5 6zM1 8l5 2v3M11 4v3M10.5 9v4M12.5 9v4'],
  ['저장', 'M4.5 1.5h8v7h-8zM1.5 5.5h8v7h-8zM3 10l2-2 2 2 2-3'],
  ['돋보기', 'M6 1.5a4 4 0 1 0 .1 0M9 9l4 4'],
  ['축소', 'M2 7h9M2 8h9'],
  ['확대', 'M2 7h10M2 8h10M6.5 2v10M7.5 2v10'],
  ['글자', 'M3.5 12L7 2l3.5 10M4 8.5h6M4.5 12L7.5 3'],
];

/* ---------- chart pieces ---------- */

const HLine = ({ y, c, w = 1, to = 1855, from = 49, dash }: { y: number; c: string; w?: number; to?: number; from?: number; dash?: string }) => (
  <path d={`M${from} ${y}H${to}`} stroke={c} strokeWidth={w} strokeDasharray={dash} />
);

const Backdrop = ({ y0, y1 }: { y0: number; y1: number }) => (
  <>
    {GREEN_STRIPES.map(([x, w]) => <rect key={x} x={x} y={y0} width={w} height={y1 - y0} fill="#ccffcc" />)}
    {YELLOW_STRIPES.map(([x, w]) => <rect key={x} x={x} y={y0} width={w} height={y1 - y0} fill="#ffff00" />)}
    {TIMES.map(([x]) => <path key={x} d={`M${x - 0.5} ${y0}V${y1}`} stroke="#d4d4d4" strokeDasharray="4 4" />)}
  </>
);

const PriceChart = () => (
  <svg viewBox="49 77 1818 817" preserveAspectRatio="none" fill="none" shapeRendering="crispEdges" role="img" aria-label="강원에너지 차트">
    <Backdrop y0={77} y1={894} />
    {RIGHT_LABELS.map(([y]) => <HLine key={y} y={y + 0.5} c="#d4d4d4" to={1862} dash="3 3" />)}
    {PROFILE.map(([a, b, x]) => <rect key={a} x="49" y={a} width={x - 49} height={b - a} fill="#fff" />)}
    {[184, 236, 289, 342].map((y) => (
      <path key={y} d={`M49 ${y + 0.5}h20M76 ${y + 0.5}h16M148 ${y + 0.5}h8M642 ${y + 0.5}h9M781 ${y + 0.5}h7`} stroke="#ff0" />
    ))}
    <rect x="49" y="395" width="1727" height="51" fill="#ffcc99" />
    <rect x="68" y="525" width="1787" height="24" fill="#00ffff" />
    <rect x="68" y="549" width="1787" height="2" fill="#ccffcc" />
    <rect x="52" y="825" width="1803" height="24" fill="#d6eaff" />
    <rect x="49" y="849" width="1806" height="8" fill="#c0c0c0" />

    {GOLD.map((g) => <polygon key={g} points={g} fill="#ffcc00" />)}
    <polygon points={cloud(1047, 1130)} fill="#cce5ff" />
    <polygon points={cloud(1150, 1240)} fill="#cce5ff" />
    <polygon points={cloud(1262, 1545)} fill="#cce5ff" />
    <polygon points={cloud(1570, 1850)} fill="#cce5ff" />
    <polygon points={cloud(270, 350)} fill="#cce5ff" />
    <polyline points={join(shifted(1030, 1850, -10, 2))} stroke="#ffcc00" strokeWidth="2" />
    <polyline points={join(shifted(270, 620, -6, 2))} stroke="#ffcc00" />
    <polyline points={join(shifted(110, 1000, 10, 4))} stroke="#cce5ff" />
    <path d={CANDLES.ice} fill="#ccffff" />
    <path d={CANDLES.pink} fill="#ffaaff" />

    <path d={line(SILVER)} stroke="#c0c0c0" strokeWidth="4" strokeLinecap="round" />
    <path d={line(BLACK_LONG)} stroke="#000" strokeWidth="4" strokeLinecap="round" />
    <path d={line(BLUE)} stroke="#3366ff" strokeWidth="4" strokeLinecap="round" />
    <path d={line(BLACK_MID)} stroke="#000" strokeWidth="3" />
    <path d="M63 890L67 777L73 720L80 603L87 456L95 308L98 243" stroke="#99cc00" strokeWidth="4" strokeLinecap="round" strokeDasharray=".1 8" />
    {OLIVE.map((o) => <path key={o} d={line(o)} stroke="#99cc00" strokeWidth="4" strokeLinecap="round" />)}

    <rect x="68" y="525" width="1787" height="3" fill="#00ffff" />
    <HLine y={561.5} c="#ff99cc" w={7} />
    <HLine y={493.5} c="#ff00ff" w={5} />
    <HLine y={373.5} c="#800080" w={9} />
    <HLine y={652.5} c="#ff0000" w={9} />
    <path d="M1855 373.500h.1" stroke="#800080" strokeWidth="7" strokeLinecap="round" />
    <path d="M1855 652.500h.1" stroke="#ff0000" strokeWidth="7" strokeLinecap="round" />
    <HLine y={712.5} c="#ff9900" w={7} />
    <HLine y={799} c="#808080" w={2} />

    <path d={line(GREEN_UP)} stroke="#00ff00" strokeWidth="6" strokeLinejoin="round" />
    <path d={line(GREEN_LOW)} stroke="#00ff00" strokeWidth="6" strokeLinejoin="round" />
    <path d={CANDLES.above} stroke="#0000ff" strokeWidth="3" />
    <path d={CANDLES.below} stroke="#ff0000" strokeWidth="3" />
    <path d={CANDLES.up} stroke="#e8180c" />
    <path d={CANDLES.down} stroke="#1860c8" />
    {WHITE_NOISE.map((d) => <path key={d.length} d={d} stroke="#fff" />)}
    <path d={WHITE_LOW} stroke="#fff" strokeDasharray="5 3" />
    <path d={line(MAG_LOW)} stroke="#ff00ff" strokeWidth="7" strokeLinejoin="round" />
    <path d={line(MAG_UP)} stroke="#ff00ff" strokeWidth="8" strokeLinejoin="round" />
    <path d="M1853 557h.1M1853 755h.1" stroke="#ff00ff" strokeWidth="8" strokeLinecap="round" />

    <path d="M49 658.500H553.500V708.500H49" stroke="#808080" />
    <HLine y={772.5} c="#00ff00" w={7} to={1862} />
    <rect x="56" y="829" width="1800" height="7" fill="#00ffff" />
    <HLine y={837} c="#808080" w={2} />
    <HLine y={848} c="#808080" w={2} />
    <HLine y={852.5} c="#0000ff" to={1862} />
    <HLine y={869} c="#000" w={2} />
    <HLine y={871} c="#808080" w={2} to={1862} />
    <HLine y={880.5} c="#993300" w={3} to={1862} />
    <HLine y={890.5} c="#0000ff" w={5} to={1857} />
    <HLine y={573.5} c="#ff00cc" to={1862} dash="3 2" />
    <HLine y={265.5} c="#ff0000" w={3} to={1862} />
    <HLine y={110} c="#808080" w={2} to={1862} />
    <HLine y={117.5} c="#ff0000" to={1862} />
    <HLine y={179.5} c="#e80000" to={1862} />
    <path d="M1630.500 77V894" stroke="#f00" />
    <path d="M1863.500 77V880" stroke="#e8180c" strokeWidth="3" />
    <path d="M1863.500 880V893" stroke="#1860c8" strokeWidth="3" />
  </svg>
);

const LowChart = () => (
  <svg viewBox="49 895 1818 144" preserveAspectRatio="none" fill="none" shapeRendering="crispEdges" role="img" aria-label="보조지표">
    <Backdrop y0={895} y1={1039} />
    {LOW_LABELS.map(([y]) => <HLine key={y} y={y + 0.5} c="#d4d4d4" to={1867} dash="3 3" />)}
    <path d={line(OBV_LONG)} stroke="#000" strokeWidth="5" />
    <path d={line(OBV_MA)} stroke="#993300" strokeWidth="3" />
    <polygon points="50,1010 53,1000 55,1004 63,1002 67,973 70,982 74,978 79,978 82,950 84,927 87,938 90,930 93,912 96,908 99,918 92,932 86,952 80,980 71,986 65,999 55,1010 50,1028" fill="#f00" />
    <path d="M783 978L786 964 789 966 793 970zM839 976L842 957 844 965 849 963zM856 966L859 949 862 955 866 953zM642 978L650 967 654 970z" fill="#f00" />
    <path d={obvNoise} stroke="#f00" />
    <path d={line(OBV)} stroke="#0000ff" strokeWidth="2" />
    <path d="M1630.500 895V1037" stroke="#f00" />
  </svg>
);

const MINOR: number[] = [];
for (let i = 0; i < 41; i++) MINOR.push(Math.round(110 + (i * 761) / 40));
const MINOR_LOW = [906, 914, 922, 930, 946, 954, 963, 971, 987, 995, 1004, 1012];

/* ---------- app ---------- */

export default function App() {
  return (
    <Win>
      <Global />
      <TitleBar>
        <TitleNo>1</TitleNo>
        <Title>
          {'[0601] 주식종합차트 - 유통비율[52.8] 거래대금[79,593(백만)] 시가총액[2,659(억)] 주식수[26,123(천)] 유통수[13,787(천)] EPS[40] PBR[6.57] 배당수익률[0] PER[257.53] ROA[-0.4] 유보율[210.0] 부채비율[128.0] 영업이익률[3.0] 외국인보유[269(천)]'}
        </Title>
        {TITLE_ICONS.map(([n, d, f]) => <TitleButton key={n} aria-label={n}><Ico d={d} fill={f} /></TitleButton>)}
        <TitleRule />
        {WINDOW_ICONS.map(([n, d, f]) => <TitleButton key={n} aria-label={n}><Ico d={d} fill={f} /></TitleButton>)}
      </TitleBar>

      <Body>
        <Bar>
          <Btn $box aria-label="목록"><Ico d="M2.5 2.5h10v9h-10zM8 3v8M2 3.5h11" fill="M1 7h3l3 3v3H6z" /></Btn>
          <Combo $w={32}>
            <ComboSelect aria-label="종류" defaultValue="주"><option>주</option></ComboSelect>
            <Arrow />
          </Combo>
          <Btn $box>전</Btn>
          <Group>
            <Combo $w={68} $flat>
              <Field $flat aria-label="종목코드" $w={50} defaultValue="114190" />
              <Arrow />
            </Combo>
            <Btn aria-label="검색"><Ico d="M6 1.5a4 4 0 1 0 .1 0M9 9l4 4" w={2} /></Btn>
          </Group>
          <Group>
            <Btn $w={17} aria-label="소리"><Ico d="M10.5 4v6M12.5 4v6" fill="M1 5h3l4-4v12L4 9H1z" /></Btn>
            <Btn $w={10} aria-label="소리 설정"><Ico size={10} d="" fill="M2 5h10l-5 6z" /></Btn>
          </Group>
          <Group>
            <Tag>신</Tag>
            <Field $flat aria-label="종목명" $w={61} $color="#800040" defaultValue="강원에너지" />
          </Group>
          <Group>{['일', '주', '월', '년'].map((t) => <Btn key={t}>{t}</Btn>)}</Group>
          <Group>{['분', '초', '틱'].map((t) => <Btn key={t} $on={t === '초'}>{t}</Btn>)}</Group>
          <Group>
            {['1', '5', '10', '60', '180', '300', '600', '3600'].map((t) => <Btn key={t} $on={t === '5'}>{t}</Btn>)}
          </Group>
          <Combo $w={38}>
            <ComboSelect aria-label="주기" defaultValue="5"><option>5</option></ComboSelect>
            <Arrow />
          </Combo>
          <Field aria-label="조회 개수" $w={31} defaultValue="4339" />
          <Plain>/6300</Plain>
          <Group>
            <Btn aria-label="지표 추가"><Ico d="M3.5 1v9M8.5 1v8M11 9v5M8.5 11.5h5" fill="M2 3h3v5H2zM7 2h3v5H7z" /></Btn>
            <Btn aria-label="선 추가"><Ico d="M1 6l4-4 3 4 4-4M1 2l4 4M11 8v6M8 11.5h6" /></Btn>
            <Btn aria-label="저장"><Ico d="M1.5 1.5h9l2 2v9h-11zM4 2v4h6V2M3.5 12V8.5h7V12" /></Btn>
            <Btn aria-label="설정"><Ico d="M7 4a3 3 0 1 0 .1 0M7 1v2M7 11v2M1 7h2M11 7h2M3 3l1 1M10 10l1 1M3 11l1-1M10 4l1-1" w={2} /></Btn>
          </Group>
          <Check><input type="checkbox" />D</Check>
        </Bar>

        <Bar>
          <Info>
            <Cell $w={172}>
              <Num $c="#e8180c">10,180▲</Num><Num $c="#e8180c" $w={45}>450</Num><Num $c="#e8180c" $w={43}>+4.62%</Num>
            </Cell>
            <Cell $w={170}><Num>7,323,113</Num><Num $c="#1848c8" $w={52}>68.66%</Num><Num>28.03%</Num></Cell>
            <Cell $w={84}><Num>79,593백만</Num></Cell>
            <Cell $w={139}><Num>최우선</Num><Num $c="#e8180c" $w={42}>10,180</Num><Num $c="#e8180c" $w={45}>10,170</Num></Cell>
            <Cell $w={182}>
              <Num>시</Num><Num $c="#e8180c">10,000</Num><Num>고</Num><Num $c="#e8180c">11,640</Num><Num>저</Num><Num $c="#e8180c">9,800</Num>
            </Cell>
          </Info>
          <Btn $box $w={40} $bg="#f6d0cc">매수</Btn>
          <Btn $box $w={40} $bg="#c8dcf4">매도</Btn>
        </Bar>

        <Chart>
          <Axis $side="l">
            <AxisNote $c="#444" $x={5} style={{ top: top(96) }}>
              <Ico d="M.5 .5h13v13h-13zM3 3.5h8v7h-8zM3 5.5h8M5.5 4v6M8.5 4v6" />
            </AxisNote>
            {LEFT_LABELS.map(([y, t]) => <AxisText key={y} $side="l" style={{ top: top(y) }}>{t}</AxisText>)}
            <CursorTag $side="l" style={{ top: top(165) }}>11,485<em>18,04%</em></CursorTag>
            <LastTag $side="l" style={{ top: top(693) }}>0,180</LastTag>
            <AxisNote $c="#e8180c" $x={6} style={{ top: top(706) }}>,62%</AxisNote>
          </Axis>
          <Plot>
            <PriceChart />
            <Legend><i /><span>강원에너지 매물대 수(13)</span></Legend>
            <Note $c="#f00" style={{ left: left(111), top: top(125) }}>최고 11,640 (-12,54%, 09:12)</Note>
            <Note $c="#0018c8" style={{ left: left(63), top: top(844) }}>최저 9,800 (3,88%, 09:00)</Note>
            <Note $c="#f00" style={{ left: left(1696), top: top(274) }}>피봇2차저항선 11,270 (15,83%)</Note>
            <Note $c="#e800c0" style={{ left: left(1703), top: top(580) }}>피봇1차저항선 10,500 (7,91%)</Note>
            <Note $c="#00e800" style={{ left: left(1732), top: top(785) }}>당일시가 10,000 (2,77%)</Note>
            <Note $c="#993300" style={{ left: left(1738), top: top(888) }}>전일종가 9,730 (0,00%)</Note>
            {([[652, 344], [651, 364], [788, 296], [843, 220]] as Pt[]).map(([x, y]) => (
              <Mark key={y} $c="#c80020" style={{ left: left(x), top: top(y) }}>2</Mark>
            ))}
          </Plot>
          <Axis $side="r">
            <AxisNote $c="#e8180c" $x={1} $size={12} style={{ top: top(78) }}>LC:3,88</AxisNote>
            <AxisNote $c="#1860c8" $x={1} $size={12} style={{ top: top(90) }}>HC:-12,5</AxisNote>
            {MINOR.map((y) => <MinorTick key={y} $side="r" style={{ top: top(y) }} />)}
            {RIGHT_LABELS.map(([y, t]) => <AxisText key={y} $side="r" style={{ top: top(y) }}>{t}</AxisText>)}
            <CursorTag $side="r" style={{ top: top(165) }}>11,485<em>-18,04%</em></CursorTag>
            <LastTag $side="r" style={{ top: top(693) }}>10,180</LastTag>
            <AxisNote $c="#e8180c" $x={8} style={{ top: top(706) }}>4,62%</AxisNote>
          </Axis>

          <Axis $side="l" $low>
            {MINOR_LOW.map((y) => <MinorTick key={y} $side="l" style={{ top: topLow(y) }} />)}
            {LOW_LABELS.map(([y, t]) => (
              <AxisText key={y} $side="l" $low style={{ top: topLow(y) }}>{t.length > 4 ? t.slice(1) : t}</AxisText>
            ))}
          </Axis>
          <Plot $low><LowChart /></Plot>
          <Axis $side="r" $low>
            {MINOR_LOW.map((y) => <MinorTick key={y} $side="r" style={{ top: topLow(y) }} />)}
            {LOW_LABELS.map(([y, t]) => <AxisText key={y} $side="r" $low style={{ top: topLow(y) }}>{t}</AxisText>)}
            <CloseMini aria-label="지표 닫기">×</CloseMini>
          </Axis>

          <CornerL />
          <TimeAxis>
            <TimeText $bold style={{ left: 0 }}>07/07</TimeText>
            {TIMES.filter(([, t]) => t).map(([x, t]) => <TimeText key={x} style={{ left: left(x - 1) }}>{t}</TimeText>)}
            <TimeTag style={{ left: left(1562) }}>2025/07/07(월) 14:30:45</TimeTag>
          </TimeAxis>
          <Corner>15:19:5</Corner>
        </Chart>

        <Bottom>
          <Raised aria-label="왼쪽으로"><Ico size={12} d="" fill="M9 2v10L4 7z" /></Raised>
          <Track><Thumb /></Track>
          <Raised aria-label="오른쪽으로"><Ico size={12} d="" fill="M5 2v10l5-5z" /></Raised>
          <Raised aria-label="뒤로"><Ico size={12} d="" fill="M6 2v10L1 7zM12 2v10L7 7z" /></Raised>
          <Raised aria-label="정지"><Ico size={12} d="" fill="M3 3h8v8H3z" /></Raised>
          <Raised aria-label="앞으로"><Ico size={12} d="" fill="M2 2v10l5-5zM8 2v10l5-5z" /></Raised>
          <Zoom><input type="range" aria-label="확대 비율" defaultValue={70} /></Zoom>
          {TOOLS.map(([n, d, f]) => (
            <Tool key={n} aria-label={n} $on={n === '십자선'}><Ico d={d} fill={f} /></Tool>
          ))}
        </Bottom>
      </Body>
    </Win>
  );
}
